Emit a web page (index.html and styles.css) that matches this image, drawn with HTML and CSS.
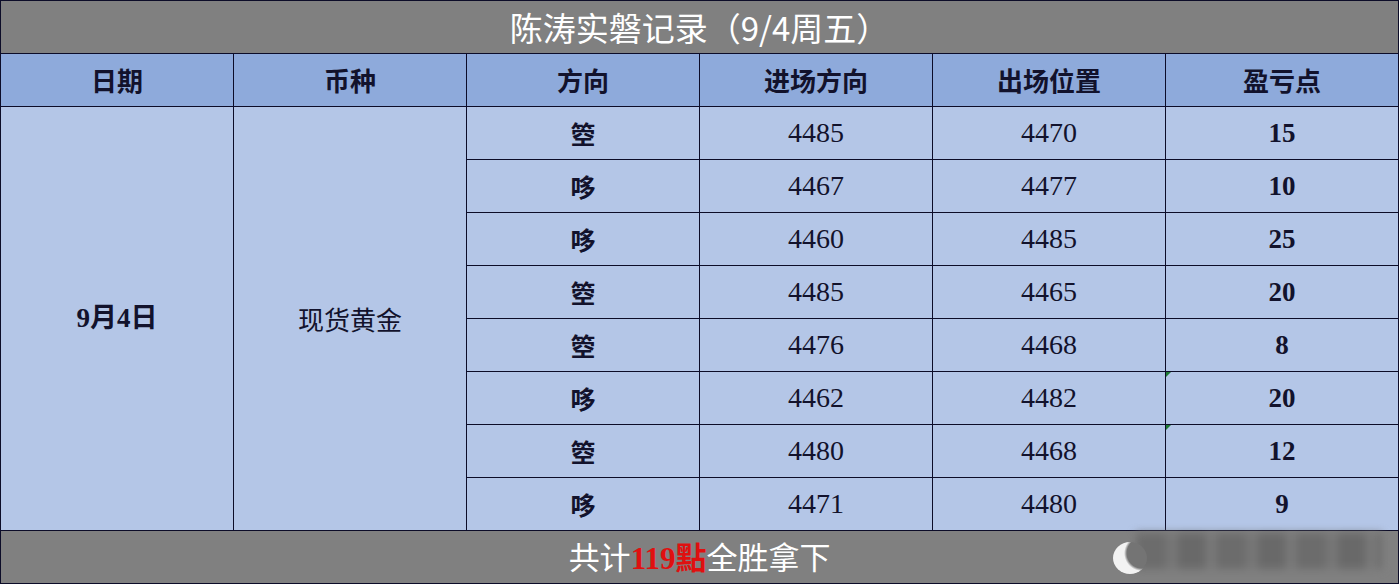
FILE: index.html
```html
<!DOCTYPE html>
<html lang="zh-CN">
<head>
<meta charset="utf-8">
<title>陈涛实磐记录</title>
<link rel="stylesheet" href="styles.css">
</head>
<body>
<div class="sheet">
<table class="rec">
  <colgroup>
    <col class="c"><col class="c"><col class="c"><col class="c"><col class="c"><col class="c">
  </colgroup>
  <tr class="title"><td colspan="6">陈涛实磐记录（9/4周五）</td></tr>
  <tr class="head">
    <td>日期</td><td>币种</td><td>方向</td><td>进场方向</td><td>出场位置</td><td>盈亏点</td>
  </tr>
  <tr>
    <td rowspan="8" class="date">9月4日</td>
    <td rowspan="8" class="kind">现货黄金</td>
    <td class="dir">箜</td><td class="num">4485</td><td class="num">4470</td><td class="pts">15</td>
  </tr>
  <tr><td class="dir">哆</td><td class="num">4467</td><td class="num">4477</td><td class="pts">10</td></tr>
  <tr><td class="dir">哆</td><td class="num">4460</td><td class="num">4485</td><td class="pts">25</td></tr>
  <tr><td class="dir">箜</td><td class="num">4485</td><td class="num">4465</td><td class="pts">20</td></tr>
  <tr><td class="dir">箜</td><td class="num">4476</td><td class="num">4468</td><td class="pts">8</td></tr>
  <tr><td class="dir">哆</td><td class="num">4462</td><td class="num">4482</td><td class="pts flag">20</td></tr>
  <tr><td class="dir">箜</td><td class="num">4480</td><td class="num">4468</td><td class="pts flag">12</td></tr>
  <tr><td class="dir">哆</td><td class="num">4471</td><td class="num">4480</td><td class="pts">9</td></tr>
  <tr class="foot"><td colspan="6">共计<span class="red">119點</span>全胜拿下</td></tr>
</table>
<div class="mark"><span class="blur"></span><span class="moon"></span></div>
</div>
</body>
</html>
```
FILE: styles.css
```css
html, body {
  margin: 0;
  padding: 0;
  background: #ffffff;
}
.sheet {
  position: relative;
  width: 1399px;
  height: 585px;
}
.rec {
  border-collapse: collapse;
  table-layout: fixed;
  width: 1399px;
  font-family: "Liberation Serif", "Noto Sans CJK SC", serif;
  color: #12122c;
}
.rec col.c { width: 233px; }
.rec td {
  border: 1px solid #0c0c28;
  height: 52px;
  padding: 0;
  text-align: center;
  vertical-align: middle;
  background: #b4c6e7;
  font-size: 27px;
  line-height: 1;
}
.rec tr.title td,
.rec tr.foot td {
  background: #808080;
  color: #ffffff;
  font-size: 33px;
  font-family: "Noto Sans CJK SC", sans-serif;
  font-weight: 400;
}
.rec tr.foot td {
  font-size: 31px;
}
.rec tr.head td {
  background: #8eaadb;
  font-family: "Noto Sans CJK SC", sans-serif;
  font-weight: 700;
  font-size: 26px;
}
.rec td.date {
  font-family: "Liberation Serif", "Noto Sans CJK SC", serif;
  font-weight: 700;
  font-size: 27px;
}
.rec td.kind {
  font-family: "Noto Sans CJK SC", sans-serif;
  font-size: 26px;
}
.rec td.dir {
  font-family: "Noto Sans CJK SC", sans-serif;
  font-weight: 700;
  font-size: 25px;
}
.rec td.num {
  font-weight: 400;
  font-size: 28px;
}
.rec td.pts {
  font-weight: 700;
  font-size: 27px;
}
.rec td.flag {
  position: relative;
}
.rec td.flag::before {
  content: "";
  position: absolute;
  left: 0;
  top: 0;
  border-top: 5px solid #1e7a32;
  border-right: 5px solid transparent;
}
.red {
  color: #e01010;
  font-family: "Liberation Serif", "Noto Sans CJK SC", serif;
  font-weight: 700;
}
.mark {
  position: absolute;
  left: 1110px;
  top: 531px;
  width: 276px;
  height: 48px;
}
.mark .blur {
  position: absolute;
  left: 26px;
  top: 2px;
  width: 246px;
  height: 36px;
  background: repeating-linear-gradient(90deg, #6c6c6c 0 30px, #777777 30px 42px, #696969 42px 70px, #7a7a7a 70px 80px);
  filter: blur(4px);
}
.mark .moon {
  position: absolute;
  left: 3px;
  top: 11px;
  width: 34px;
  height: 32px;
  border-radius: 50%;
  background: radial-gradient(circle at 85% 35%, #747474 0 42%, #f2f2f2 50%);
  filter: blur(0.6px);
}
```
